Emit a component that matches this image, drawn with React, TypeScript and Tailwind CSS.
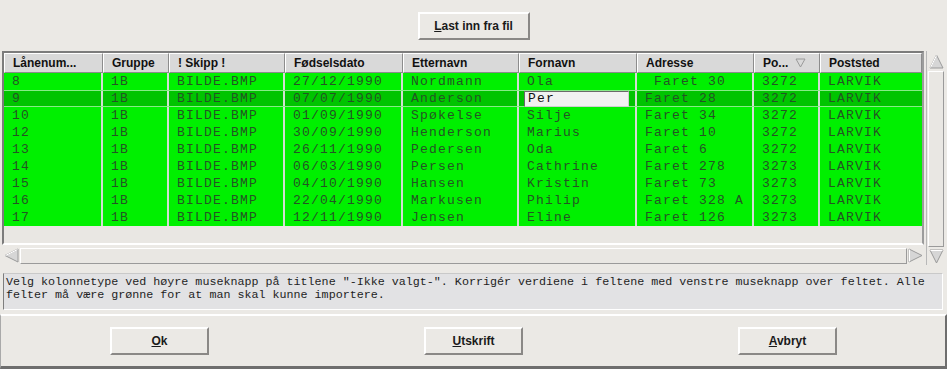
import React from 'react';

const SANS = 'font-["Liberation_Sans",Arial,sans-serif]';
const MONO = 'font-["Liberation_Mono","Courier_New",monospace]';

// column widths (px) incl. the 2px divider on the right
const columns = [
  { title: 'Lånenum...', w: 'w-[99px]' },
  { title: 'Gruppe', w: 'w-[66px]' },
  { title: '! Skipp !', w: 'w-[116px]' },
  { title: 'Fødselsdato', w: 'w-[118px]' },
  { title: 'Etternavn', w: 'w-[116px]' },
  { title: 'Fornavn', w: 'w-[118px]' },
  { title: 'Adresse', w: 'w-[117px]' },
  { title: 'Po...', w: 'w-[66px]', sort: true },
  { title: 'Poststed', w: 'w-[102px]' },
];

const rows: string[][] = [
  ['8', '1B', 'BILDE.BMP', '27/12/1990', 'Nordmann', 'Ola', ' Faret 30', '3272', 'LARVIK'],
  ['9', '1B', 'BILDE.BMP', '07/07/1990', 'Anderson', 'Per', 'Faret 28', '3272', 'LARVIK'],
  ['10', '1B', 'BILDE.BMP', '01/09/1990', 'Spøkelse', 'Silje', 'Faret 34', '3272', 'LARVIK'],
  ['12', '1B', 'BILDE.BMP', '30/09/1990', 'Henderson', 'Marius', 'Faret 10', '3272', 'LARVIK'],
  ['13', '1B', 'BILDE.BMP', '26/11/1990', 'Pedersen', 'Oda', 'Faret 6', '3272', 'LARVIK'],
  ['14', '1B', 'BILDE.BMP', '06/03/1990', 'Persen', 'Cathrine', 'Faret 278', '3273', 'LARVIK'],
  ['15', '1B', 'BILDE.BMP', '04/10/1990', 'Hansen', 'Kristin', 'Faret 73', '3273', 'LARVIK'],
  ['16', '1B', 'BILDE.BMP', '22/04/1990', 'Markusen', 'Philip', 'Faret 328 A', '3273', 'LARVIK'],
  ['17', '1B', 'BILDE.BMP', '12/11/1990', 'Jensen', 'Eline', 'Faret 126', '3273', 'LARVIK'],
];

const SELECTED = 1;
const EDIT_COL = 5;

// --- raised push button with mnemonic underline ---
const Button = ({ label, w }: { label: string; w: string }) => (
  <button
    className={`${w} h-[28px] border-2 border-t-white border-l-white border-r-[#8a8886] border-b-[#8a8886] bg-[#ebe9e5] text-[12px] font-bold text-[#1a1a1a] ${SANS}`}
  >
    <span className="underline">{label[0]}</span>
    {label.slice(1)}
  </button>
);

// --- little 3D scroll arrow ---
const Arrow = ({ dir }: { dir: 'up' | 'down' | 'left' | 'right' }) => {
  const pts = {
    up: '2,15 8.5,2 15,15',
    down: '2,2 15,2 8.5,15',
    left: '15,2 15,15 2,8.5',
    right: '2,2 2,15 15,8.5',
  }[dir];
  return (
    <svg width="17" height="17" viewBox="0 0 17 17" className="shrink-0">
      <polygon points={pts} fill="#d6d6d6" stroke="#9a9a9a" strokeWidth="1" />
      {dir === 'up' && <line x1="2.5" y1="14.5" x2="8.5" y2="2.5" stroke="#fff" strokeWidth="1" />}
      {dir === 'left' && <line x1="2.5" y1="8.5" x2="14.5" y2="2.5" stroke="#fff" strokeWidth="1" />}
      {dir === 'down' && <line x1="2.5" y1="2.5" x2="14.5" y2="2.5" stroke="#fff" strokeWidth="1" />}
      {dir === 'right' && <line x1="2.5" y1="2.5" x2="2.5" y2="14.5" stroke="#fff" strokeWidth="1" />}
    </svg>
  );
};

export default function App() {
  return (
    <div className={`flex h-[369px] w-[947px] flex-col overflow-hidden bg-[#ebe9e5] ${SANS}`}>
      {/* top: load button */}
      <div className="flex h-[51px] shrink-0 items-center justify-center">
        <Button label="Last inn fra fil" w="w-[112px]" />
      </div>

      {/* table + scrollbars */}
      <div className="flex h-[214px] shrink-0 gap-[2px] pl-[2px]">
        <div className="flex w-[922px] flex-col gap-[2px]">
          {/* grid viewport */}
          <div className="h-[194px] border-2 border-t-[#7c7c7c] border-l-[#7c7c7c] border-r-[#9c9c9c] border-b-white bg-[#e9e7e3]">
            {/* header */}
            <div className="flex h-[20px]">
              {columns.map((c) => (
                <div
                  key={c.title}
                  className={`${c.w} flex shrink-0 items-center border border-t-white border-l-white border-r-[#8c8c8c] border-b-[#8c8c8c] bg-[#d9d9d9] pl-[8px] text-[12px] font-bold text-[#111]`}
                >
                  <span>{c.title}</span>
                  {c.sort && (
                    <svg width="11" height="10" viewBox="0 0 11 10" className="ml-[7px]">
                      <polygon points="1,1 10,1 5.5,9" fill="none" stroke="#9a9a9a" strokeWidth="1" />
                    </svg>
                  )}
                </div>
              ))}
            </div>
            {/* rows */}
            {rows.map((r, ri) => (
              <div
                key={ri}
                className={`flex h-[17px] ${
                  ri === SELECTED ? 'border-y border-[#86ec86] bg-[#00c400]' : 'bg-[#00f000]'
                }`}
              >
                {r.map((v, ci) => (
                  <div
                    key={ci}
                    className={`${columns[ci].w} relative flex shrink-0 items-center whitespace-pre pl-[8px] text-[13px] tracking-[1.2px] text-[#245424] ${MONO} ${
                      ci < r.length - 1 ? 'border-r-2 border-[#d3ddd3]' : ''
                    }`}
                  >
                    {ri === SELECTED && ci === EDIT_COL ? (
                      <div className="absolute top-[0px] left-[5px] flex h-[16px] w-[105px] items-center border border-t-[#6a6a6a] border-l-[#6a6a6a] border-r-[#cfcfcf] border-b-[#cfcfcf] bg-[#f1f1f1] pl-[3px] text-[#111]">
                        {v}
                      </div>
                    ) : (
                      v
                    )}
                  </div>
                ))}
              </div>
            ))}
          </div>
          {/* horizontal scrollbar */}
          <div className="flex h-[17px] items-center pl-[1px]">
            <Arrow dir="left" />
            <div className="h-[16px] flex-1 border border-t-white border-l-white border-r-[#9a9a9a] border-b-[#9a9a9a] bg-[#e9e7e3]" />
            <Arrow dir="right" />
          </div>
        </div>

        {/* vertical scrollbar */}
        <div className="flex w-[19px] flex-col items-center border-l border-[#b8b8b8] pt-[2px]">
          <Arrow dir="up" />
          <div className="my-[1px] w-[16px] flex-1 border border-t-white border-l-white border-r-[#9a9a9a] border-b-[#9a9a9a] bg-[#e9e7e3]" />
          <Arrow dir="down" />
        </div>
      </div>

      {/* help text */}
      <div
        className={`mt-[8px] ml-[3px] h-[37px] w-[940px] shrink-0 border border-t-[#c9c9c9] border-l-[#7e7e7e] border-r-white border-b-white bg-[#e2e2e4] pt-[2px] pl-[2px] text-[11.7px] leading-[13px] text-[#1e1e1e] ${MONO}`}
      >
        Velg kolonnetype ved høyre museknapp på titlene "-Ikke valgt-". Korrigér verdiene i feltene med venstre museknapp over feltet. Alle felter må være grønne for at man skal kunne importere.
      </div>

      {/* bottom buttons */}
      <div className="mt-[4px] flex h-[55px] shrink-0 items-start border-t-2 border-r-2 border-b-[3px] border-l border-t-white border-r-[#6e6e6e] border-b-[#6e6e6e] border-l-[#a9a9a9] pt-[11px]">
        <div className="ml-[109px]">
          <Button label="Ok" w="w-[99px]" />
        </div>
        <div className="ml-[215px]">
          <Button label="Utskrift" w="w-[99px]" />
        </div>
        <div className="ml-[215px]">
          <Button label="Avbryt" w="w-[99px]" />
        </div>
      </div>
    </div>
  );
}
